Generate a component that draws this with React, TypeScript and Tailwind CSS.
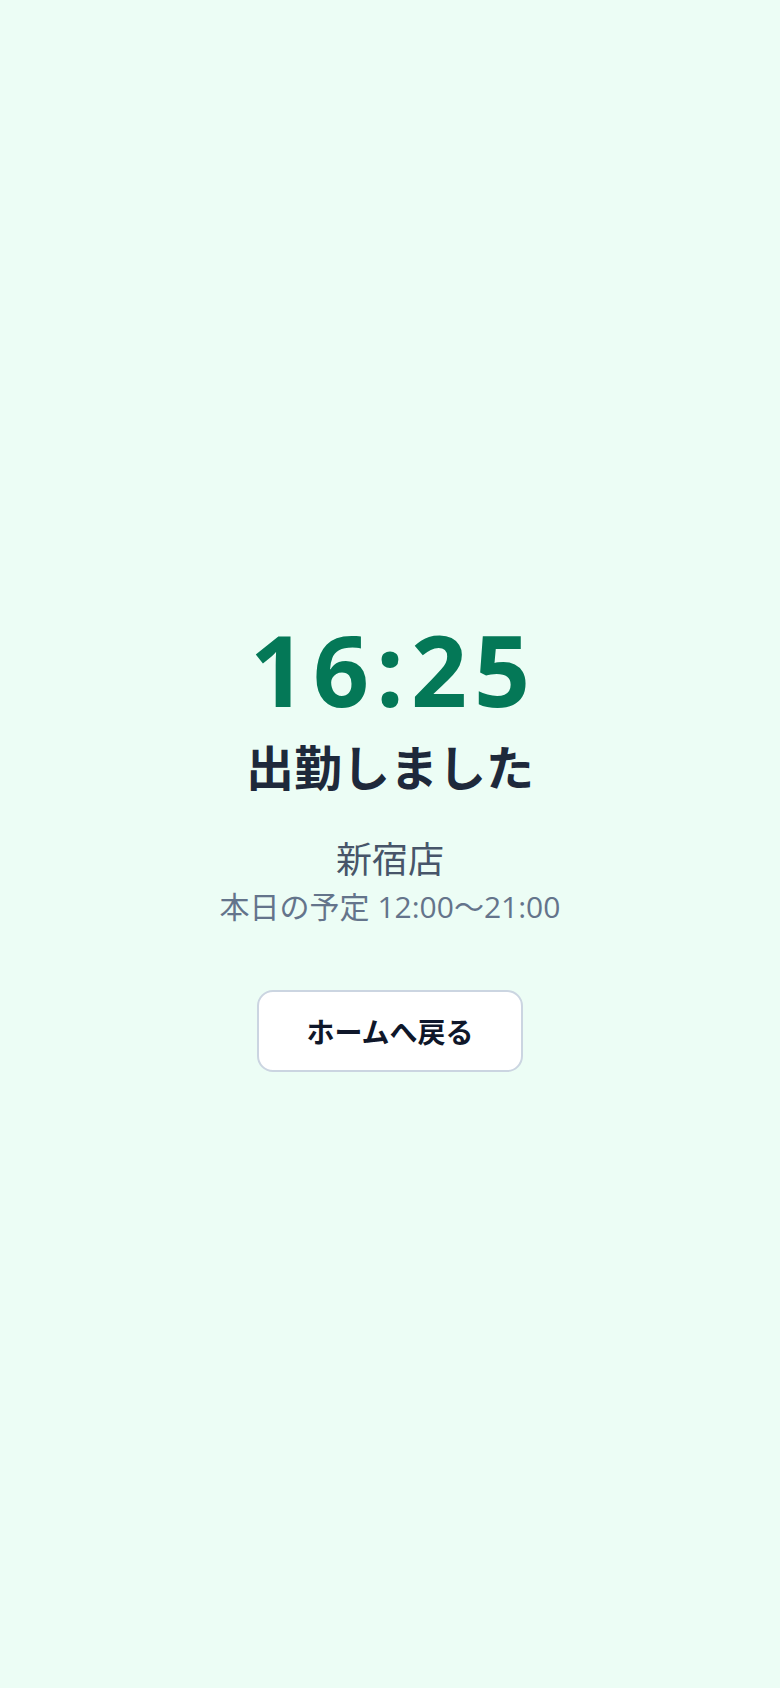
import React from "react";

export default function App() {
  return (
    <div
      className="min-h-screen w-full bg-[#ecfdf5] flex flex-col items-center justify-center"
      style={{ fontFamily: '"Noto Sans CJK JP", "Noto Sans", sans-serif' }}
    >
      <div
        className="pt-1 text-[98px] font-bold leading-none tracking-[7px] pl-[7px] text-[#047857]"
        style={{ fontFamily: '"Open Sans", "Noto Sans CJK JP", sans-serif' }}
      >
        16:25
      </div>
      <div className="mt-[17px] text-[48px] font-bold leading-tight text-[#1e293b]">出勤しました</div>
      <div className="mt-10 text-[36px] leading-tight text-[#475569]">新宿店</div>
      <div
        className="mt-2 text-[30px] leading-tight text-[#64748b]"
        style={{ fontFamily: '"Open Sans", "Noto Sans CJK JP", sans-serif' }}
      >
        本日の予定 12:00〜21:00
      </div>
      <button className="mt-[64px] w-[266px] h-[82px] rounded-2xl border-2 border-[#cbd5e1] bg-white text-[28px] font-bold text-[#0f172a] flex items-center justify-center">
        ホームへ戻る
      </button>
    </div>
  );
}
